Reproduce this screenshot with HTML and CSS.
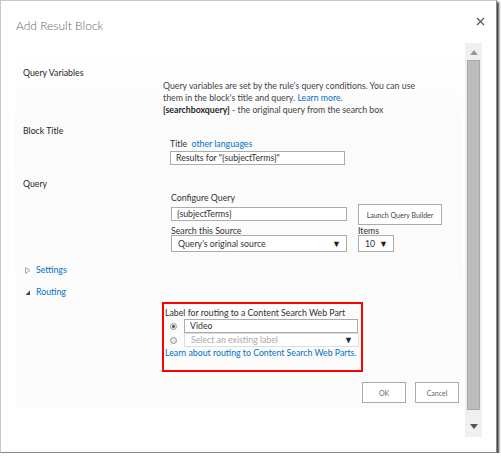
FILE: index.html
```html
<!DOCTYPE html>
<html>
<head>
<meta charset="utf-8">
<link rel="stylesheet" href="styles.css">
</head>
<body>
<div class="dialog">
  <div class="header">
    <div class="title">Add Result Block</div>
    <svg class="close" width="9" height="9" viewBox="0 0 9 9"><path d="M1 1L8 8M8 1L1 8" stroke="#555" stroke-width="1.2"/></svg>
  </div>
  <div class="main">
    <div class="content">
      <div class="panel">
        <div class="section s-vars">
          <div class="label">Query Variables</div>
          <div class="fields desc">
            <div>Query variables are set by the rule's query conditions. You can use</div>
            <div>them in the block's title and query. <a class="link">Learn more.</a></div>
            <div><b>{searchboxquery}</b> - the original query from the search box</div>
          </div>
        </div>
        <div class="section s-title">
          <div class="label">Block Title</div>
          <div class="fields f-title">
            <div class="flabel">Title&nbsp; <a class="link">other languages</a></div>
            <div class="input w-title">Results for "{subjectTerms}"</div>
          </div>
        </div>
        <div class="section s-query">
          <div class="label">Query</div>
          <div class="fields f-query">
            <div class="qgrid">
              <div class="flabel">Configure Query</div>
              <div></div>
              <div class="input w-query">{subjectTerms}</div>
              <div class="btn lqb">Launch Query Builder</div>
              <div class="flabel short">Search this Source</div>
              <div class="flabel short">Items</div>
              <div class="select w-src"><span>Query's original source</span><span class="arr">▼</span></div>
              <div class="select w-items"><span>10</span><span class="arr">▼</span></div>
            </div>
          </div>
        </div>
        <div class="toggle t-settings">
          <svg width="6" height="7" viewBox="0 0 6 7"><path d="M0.5 0.5L5 3.5L0.5 6.5Z" fill="none" stroke="#aaa" stroke-width="1"/></svg>
          <a class="link">Settings</a>
        </div>
        <div class="toggle t-routing">
          <svg width="6" height="7" viewBox="0 0 6 7"><path d="M5 1.5L5 6L0.5 6Z" fill="#444"/></svg>
          <a class="link">Routing</a>
        </div>
        <div class="routing">
          <div class="flabel">Label for routing to a Content Search Web Part</div>
          <div class="rrow">
            <span class="radio checked"></span>
            <div class="input w-video">Video</div>
          </div>
          <div class="rrow">
            <span class="radio"></span>
            <div class="select w-label dim"><span>Select an existing label</span><span class="arr">▼</span></div>
          </div>
          <a class="link nowrap">Learn about routing to Content Search Web Parts.</a>
        </div>
        <div class="actions">
          <div class="btn ok">OK</div>
          <div class="btn cancel">Cancel</div>
        </div>
      </div>
    </div>
    <div class="scrollbar">
      <svg class="up" width="8" height="5" viewBox="0 0 8 5"><path d="M0 5L4 0L8 5Z" fill="#999"/></svg>
      <div class="thumb"></div>
      <svg class="down" width="8" height="5" viewBox="0 0 8 5"><path d="M0 0L8 0L4 5Z" fill="#555"/></svg>
    </div>
  </div>
</div>
</body>
</html>
```
FILE: styles.css
```css
html, body {
  margin: 0;
  padding: 0;
  background: #fff;
}
body {
  font-family: "Lato", "Open Sans", sans-serif;
  font-size: 8.75px;
  line-height: 12px;
  color: #333;
}
.dialog {
  box-sizing: border-box;
  width: 497px;
  height: 453px;
  border: 1px solid #c8c8c8;
  border-right-color: #888;
  border-bottom-color: #888;
  background: #fff;
  box-shadow: 2px 2px 2px rgba(0,0,0,0.75);
}
.header {
  height: 42px;
  display: flex;
  justify-content: space-between;
  align-items: flex-start;
}
.title {
  margin: 17px 0 0 15px;
  font-family: "Lato", sans-serif;
  font-weight: 300;
  font-size: 12px;
  line-height: 16px;
  color: #666;
}
.close {
  margin: 16px 11px 0 0;
}
.main {
  display: flex;
}
.content {
  width: 448px;
  margin-left: 14px;
}
.panel {
  margin-top: 7px;
  height: 358px;
  background: linear-gradient(#fff, #fbfbfb 20%, #fcfcfc);
  padding-left: 8px;
  box-sizing: border-box;
  display: flex;
  flex-direction: column;
  align-items: flex-start;
}
.section {
  display: grid;
  grid-template-columns: 140px auto;
}
.label {
  color: #262626;
}
.s-vars { margin-top: 17px; }
.desc { margin-top: 13px; color: #444; }
.desc b { color: #262626; }
.link {
  color: #0072c6;
  text-decoration: none;
}
.nowrap { white-space: nowrap; }
.s-title { margin-top: 9px; }
.f-title { margin-top: 13px; padding-left: 7px; }
.flabel { color: #333; }
.input {
  box-sizing: border-box;
  border: 1px solid #ababab;
  background: #fff;
  height: 14px;
  line-height: 12px;
  padding-left: 5px;
  color: #333;
}
.w-title { width: 175px; margin-top: 1px; }
.s-query { margin-top: 13px; }
.f-query { margin-top: 14px; padding-left: 8px; }
.qgrid {
  display: grid;
  grid-template-columns: 187px auto;
}
.qgrid .flabel { height: 13px; }
.qgrid .flabel.short { height: 10px; }
.btn {
  box-sizing: border-box;
  border: 1px solid #ababab;
  background: #fff;
  color: #444;
  display: flex;
  align-items: center;
  justify-content: center;
}
.lqb {
  width: 84px;
  height: 21px;
  font-size: 7px;
  margin-top: -1px;
  margin-bottom: -1px;
}
.qgrid .w-query { width: 176px; margin-top: 2px; margin-bottom: 4px; }
.select {
  box-sizing: border-box;
  border: 1px solid #ababab;
  background: #fff;
  height: 17px;
  display: flex;
  align-items: center;
  justify-content: space-between;
  padding: 0 5px 0 6px;
  color: #333;
}
.arr { font-size: 9px; color: #222; }
.w-src { width: 176px; }
.w-items { width: 36px; }
.toggle {
  display: flex;
  align-items: center;
  gap: 5px;
  margin-left: 2px;
}
.t-settings { margin-top: 12px; }
.t-routing { margin-top: 10px; }
.routing {
  box-sizing: border-box;
  margin: 4px 0 0 139px;
  width: 201px;
  height: 70px;
  border: 2px solid #f00;
  padding: 3px 0 0 1px;
}
.rrow {
  display: flex;
  align-items: center;
  height: 14px;
}
.radio {
  box-sizing: border-box;
  width: 7px;
  height: 7px;
  border: 1px solid #999;
  border-radius: 50%;
  background: #e8e8e8;
  margin: 0 7px 0 5px;
}
.radio.checked {
  background: radial-gradient(#555 35%, #e8e8e8 45%);
}
.w-video { width: 174px; }
.w-label { width: 175px; height: 14px; border-color: #ddd; }
.dim { color: #aaa; }
.actions {
  align-self: flex-end;
  display: flex;
  gap: 9px;
  margin-top: 10px;
  margin-right: 4px;
}
.ok, .cancel {
  width: 44px;
  height: 21px;
  font-size: 7px;
  color: #666;
}
.scrollbar {
  width: 17px;
  height: 394px;
  margin-top: 0;
  margin-left: 2px;
  background: #f0f0f0;
  display: flex;
  flex-direction: column;
  align-items: center;
}
.up { margin-top: 7px; }
.thumb {
  box-sizing: border-box;
  width: 13px;
  height: 350px;
  margin-top: 5px;
  background: #bdbdbd;
  border: 1px solid #a9a9a9;
}
.down { margin-top: 14px; }
```
